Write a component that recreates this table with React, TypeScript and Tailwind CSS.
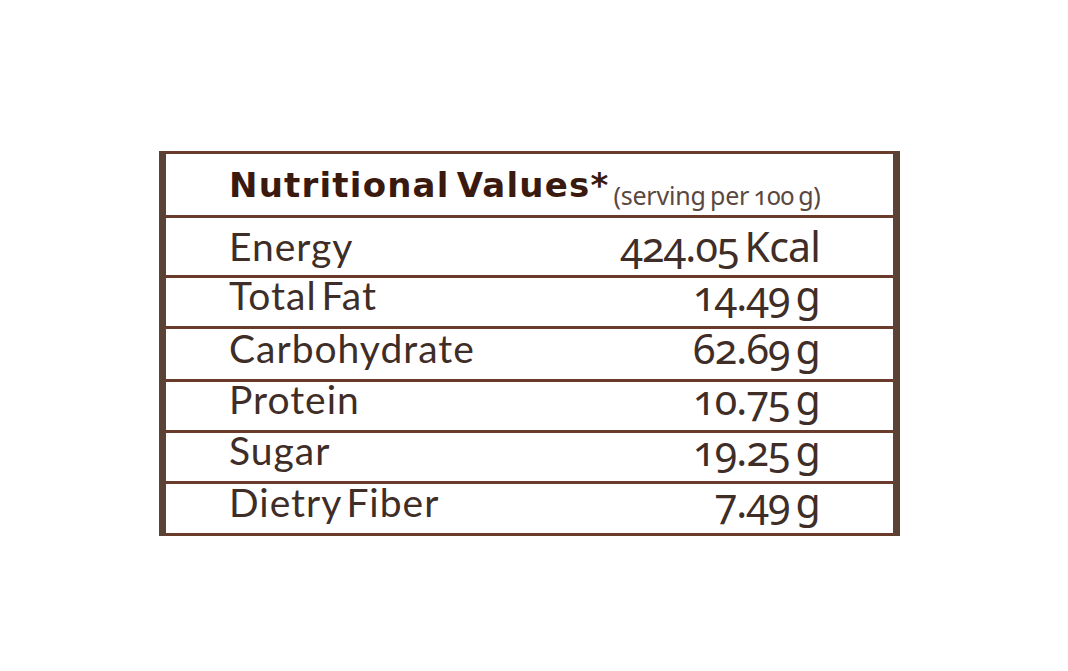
const rows = [
  { label: "Energy", value: "424.05 Kcal", h: "h-[60px]", pb: "pb-[14px]" },
  { label: "Total Fat", value: "14.49 g", h: "h-[51px]", pb: "pb-[16px]" },
  { label: "Carbohydrate", value: "62.69 g", h: "h-[53px]", pb: "pb-[16px]" },
  { label: "Protein", value: "10.75 g", h: "h-[51px]", pb: "pb-[16px]" },
  { label: "Sugar", value: "19.25 g", h: "h-[51px]", pb: "pb-[16px]" },
  { label: "Dietry Fiber", value: "7.49 g", h: "h-[52px]", pb: "pb-[16px]" },
];

export default function App() {
  return (
    <div className="w-[1068px] h-[671px] bg-white font-['Lato','Liberation_Sans',sans-serif]">
      <div className="pl-[159px] pt-[151px]">
        <div className="flex w-[741px]">
          <div className="w-[7px] bg-[#5b4236]" />
          <div className="flex-1 flex flex-col border-t-[3px] border-[#6a3a2a]">
            <div className="h-[64px] flex items-end pl-[63px] pb-[13px] border-b-[3px] border-[#6a3a2a] box-border">
              <span className="font-['DejaVu_Sans',sans-serif] text-[34px] leading-none font-bold text-[#3a1a0e] tracking-[1.2px] [word-spacing:-6px]">
                Nutritional Values*
              </span>
              <span className="ml-[4px] font-['Noto_Sans',sans-serif] text-[25px] leading-none text-[#5a4840] tracking-[-0.2px] [word-spacing:-2px] relative top-[6px] oldstyle-nums">
                (serving per 100 g)
              </span>
            </div>
            {rows.map((r) => (
              <div
                key={r.label}
                className={`${r.h} ${r.pb} flex items-end justify-between pl-[63px] pr-[73px] border-b-[3px] border-[#6a3a2a] box-border text-[#3f2d27]`}
              >
                <span className="text-[39px] leading-[30px] tracking-[1px] [word-spacing:-6px]">
                  {r.label}
                </span>
                <span className="font-['Noto_Sans',sans-serif] text-[41px] leading-[30px] tracking-[-0.8px] [word-spacing:-4px] oldstyle-nums">
                  {r.value}
                </span>
              </div>
            ))}
          </div>
          <div className="w-[7px] bg-[#5b4236]" />
        </div>
      </div>
    </div>
  );
}
